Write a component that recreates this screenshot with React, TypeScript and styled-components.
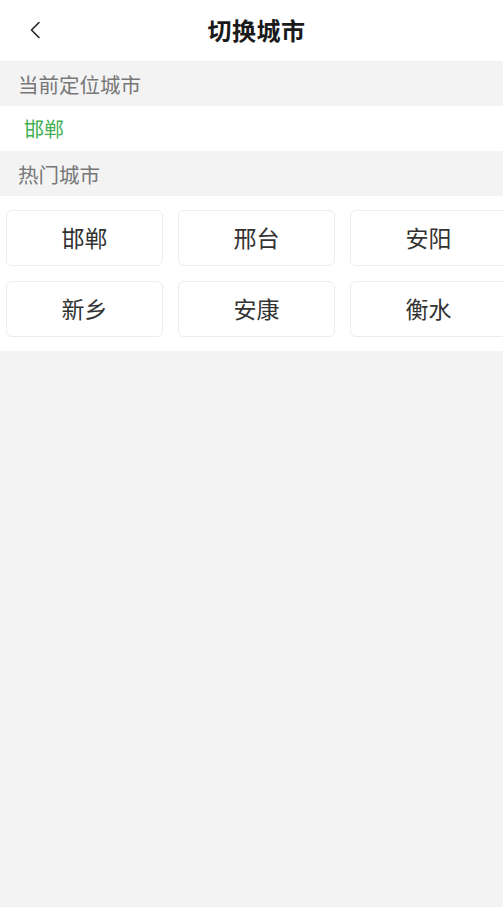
import React from "react";
import styled, { createGlobalStyle } from "styled-components";

const GlobalStyle = createGlobalStyle`
  html, body {
    margin: 0;
    padding: 0;
    background: #f3f3f3;
    font-family: "Noto Sans CJK SC", "Noto Sans", sans-serif;
  }
`;

const hotCities = ["邯郸", "邢台", "安阳", "新乡", "安康", "衡水"];

export default function App() {
  return (
    <>
      <GlobalStyle />
      <Page>
        <Header>
          <BackButton aria-label="返回">
            <svg width="12" height="18" viewBox="0 0 12 18" fill="none">
              <path
                d="M10 1.5 L2.5 9 L10 16.5"
                stroke="#222"
                strokeWidth="1.6"
                strokeLinecap="round"
                strokeLinejoin="round"
              />
            </svg>
          </BackButton>
          <Title>切换城市</Title>
        </Header>

        <SectionLabel>当前定位城市</SectionLabel>
        <CurrentCity>邯郸</CurrentCity>

        <SectionLabel>热门城市</SectionLabel>
        <CityGrid>
          {hotCities.map((city) => (
            <CityButton key={city}>{city}</CityButton>
          ))}
        </CityGrid>
      </Page>
    </>
  );
}

const Page = styled.div`
  width: 503px;
  min-height: 907px;
  background: #f3f3f3;
  overflow: hidden;
`;

const Header = styled.div`
  position: relative;
  height: 61px;
  background: #fff;
  display: flex;
  align-items: center;
  justify-content: center;
`;

const BackButton = styled.button`
  position: absolute;
  left: 24px;
  top: 19px;
  width: 22px;
  height: 22px;
  padding: 0;
  border: none;
  background: none;
  display: flex;
  align-items: center;
  justify-content: center;
`;

const Title = styled.h1`
  margin: -2px 0 0 10px;
  font-size: 24px;
  font-weight: 700;
  color: #1a1a1a;
  letter-spacing: 0.5px;
`;

const SectionLabel = styled.div`
  height: 45px;
  padding-left: 18px;
  display: flex;
  align-items: center;
  font-size: 20.5px;
  color: #777;
`;

const CurrentCity = styled.div`
  height: 45px;
  padding-left: 24px;
  display: flex;
  align-items: center;
  background: #fff;
  font-size: 20px;
  color: #43b052;
`;

const CityGrid = styled.div`
  background: #fff;
  padding: 14px 0 14px 6px;
  display: grid;
  grid-template-columns: repeat(3, 157px);
  column-gap: 15px;
  row-gap: 15px;
`;

const CityButton = styled.div`
  height: 56px;
  box-sizing: border-box;
  padding-bottom: 3px;
  border: 1px solid #ececec;
  border-radius: 6px;
  display: flex;
  align-items: center;
  justify-content: center;
  font-size: 23px;
  color: #333;
  background: #fff;
`;
